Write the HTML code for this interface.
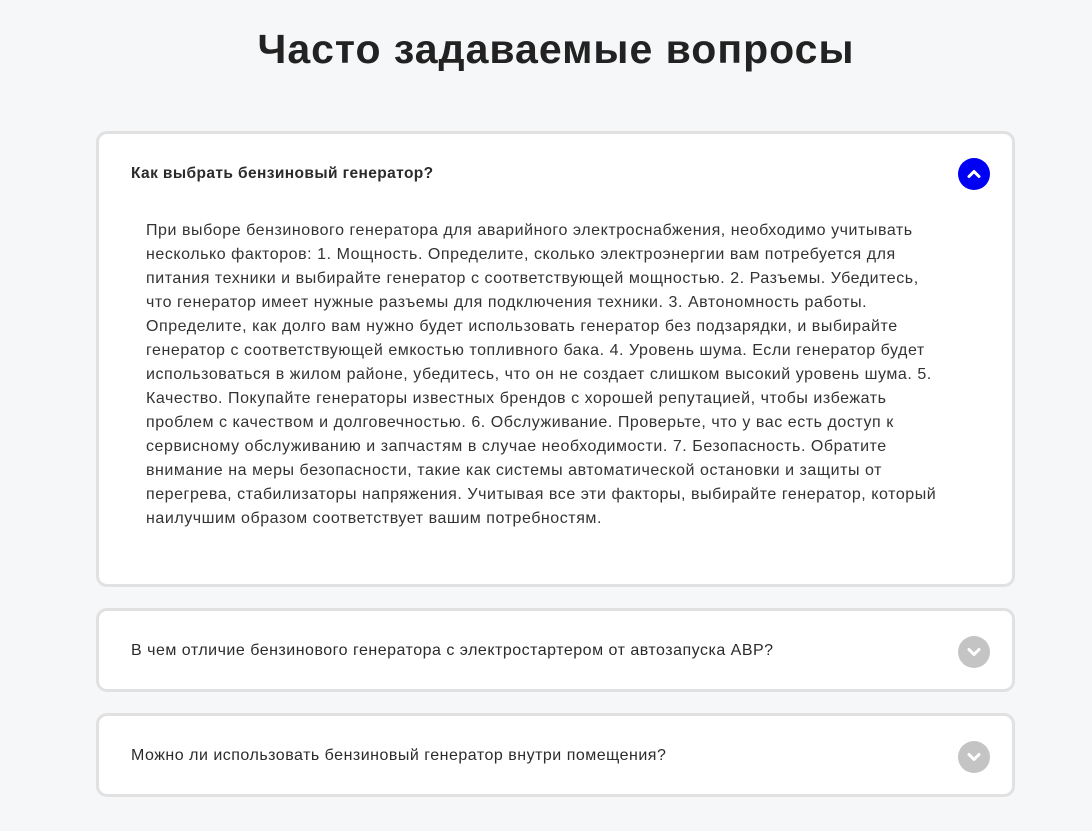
<!DOCTYPE html>
<html><head><meta charset="utf-8"><style>
body{margin:0;background:#f6f7f9;font-family:"Liberation Sans","DejaVu Sans",sans-serif;color:#2b2b2b;width:1092px;height:831px;overflow:hidden;position:relative}
h1{position:absolute;top:26px;left:0;width:1112px;text-align:center;margin:0;font-size:41px;font-weight:700;color:#222;letter-spacing:1px}
.card{position:absolute;left:96px;width:913px;background:#fff;border:3px solid #e1e1e1;border-radius:11px}
.q{position:absolute;left:32px;font-size:16px;color:#2b2b2b;white-space:nowrap;letter-spacing:0.5px}
.ic{position:absolute;left:859px;width:32px;height:32px;border-radius:50%}
.ic svg{position:absolute;left:0;top:0}
.body{position:absolute;left:47px;top:85px;font-size:16px;line-height:24px;color:#333;white-space:nowrap;letter-spacing:0.55px}
</style></head><body>
<h1>Часто задаваемые вопросы</h1>
<div class="card" style="top:131px;height:450px">
 <div class="q" style="top:31px;font-weight:700;font-size:15.5px;letter-spacing:0.4px">Как выбрать бензиновый генератор?</div>
 <div class="ic" style="top:24px;background:#0000f5"><svg width="32" height="32"><path d="M11 18.5 L16 13.5 L21 18.5" fill="none" stroke="#fff" stroke-width="3" stroke-linecap="round" stroke-linejoin="round"/></svg></div>
 <div class="body">При выборе бензинового генератора для аварийного электроснабжения, необходимо учитывать<br>несколько факторов: 1. Мощность. Определите, сколько электроэнергии вам потребуется для<br>питания техники и выбирайте генератор с соответствующей мощностью. 2. Разъемы. Убедитесь,<br>что генератор имеет нужные разъемы для подключения техники. 3. Автономность работы.<br>Определите, как долго вам нужно будет использовать генератор без подзарядки, и выбирайте<br>генератор с соответствующей емкостью топливного бака. 4. Уровень шума. Если генератор будет<br>использоваться в жилом районе, убедитесь, что он не создает слишком высокий уровень шума. 5.<br>Качество. Покупайте генераторы известных брендов с хорошей репутацией, чтобы избежать<br>проблем с качеством и долговечностью. 6. Обслуживание. Проверьте, что у вас есть доступ к<br>сервисному обслуживанию и запчастям в случае необходимости. 7. Безопасность. Обратите<br>внимание на меры безопасности, такие как системы автоматической остановки и защиты от<br>перегрева, стабилизаторы напряжения. Учитывая все эти факторы, выбирайте генератор, который<br>наилучшим образом соответствует вашим потребностям.</div>
</div>
<div class="card" style="top:608px;height:78px">
 <div class="q" style="top:31px">В чем отличие бензинового генератора с электростартером от автозапуска АВР?</div>
 <div class="ic" style="top:25px;background:#c4c4c4"><svg width="32" height="32"><path d="M11 13.5 L16 18.5 L21 13.5" fill="none" stroke="#fff" stroke-width="3" stroke-linecap="round" stroke-linejoin="round"/></svg></div>
</div>
<div class="card" style="top:713px;height:78px">
 <div class="q" style="top:31px">Можно ли использовать бензиновый генератор внутри помещения?</div>
 <div class="ic" style="top:25px;background:#c4c4c4"><svg width="32" height="32"><path d="M11 13.5 L16 18.5 L21 13.5" fill="none" stroke="#fff" stroke-width="3" stroke-linecap="round" stroke-linejoin="round"/></svg></div>
</div>
</body></html>
